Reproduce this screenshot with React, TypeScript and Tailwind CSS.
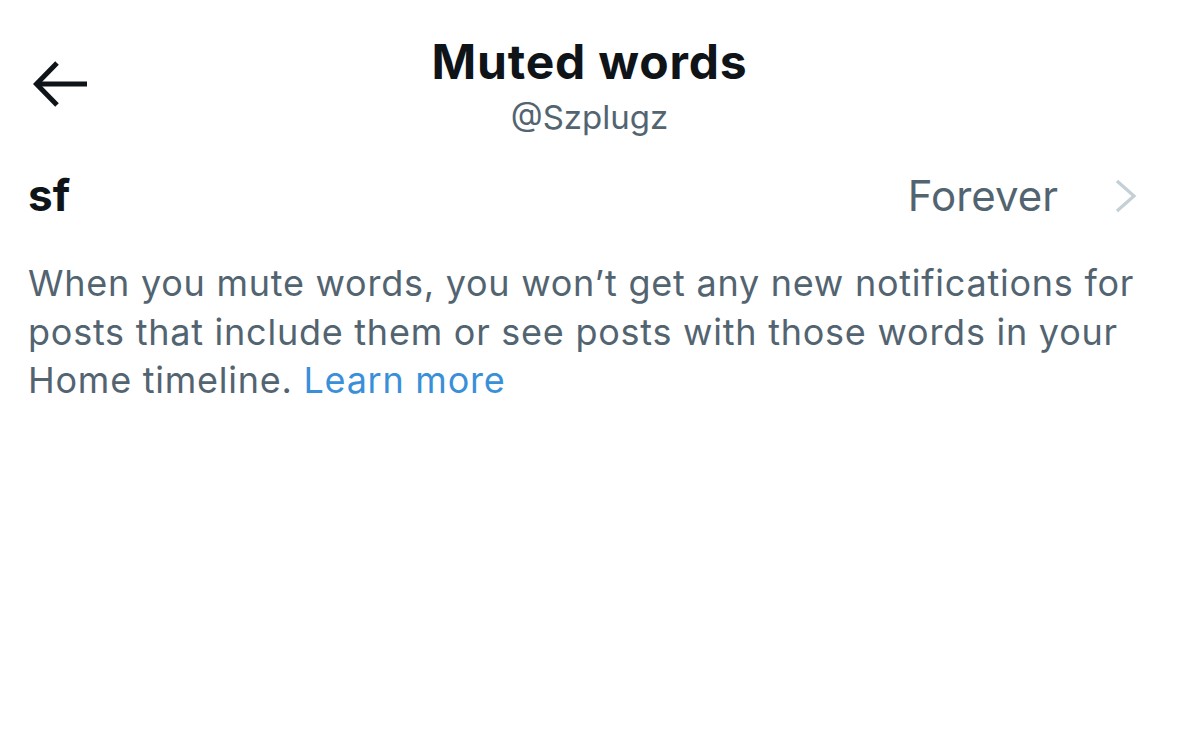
const App = () => {
  return (
    <div className="w-[1179px] h-[736px] bg-white overflow-hidden" style={{ fontFamily: 'Inter, "Noto Sans", sans-serif' }}>
      {/* Header */}
      <header className="relative flex flex-col items-center pt-[33px]">
        <button className="absolute left-[33px] top-[60px] text-[#0f1419]" aria-label="Back">
          <svg width="56" height="48" viewBox="0 0 56 48" fill="none" stroke="currentColor" strokeWidth={5}>
            <path d="M4 24h50" />
            <path d="M24 3L3.5 24 24 45" strokeLinejoin="miter" />
          </svg>
        </button>
        <h1 className="text-[48px] leading-[58px] font-bold text-[#0f1419] tracking-[0.8px]">Muted words</h1>
        <p className="mt-[6px] text-[33px] leading-[40px] text-[#536471]">@Szplugz</p>
      </header>

      {/* Muted word row */}
      <div className="mt-[32px] flex items-center justify-between pl-[28px] pr-[42px] h-[53px]">
        <span className="text-[44px] leading-[53px] font-bold text-[#0f1419]">sf</span>
        <div className="flex items-center gap-[57px]">
          <span className="text-[42px] leading-[53px] text-[#536471]">Forever</span>
          <svg width="22" height="34" viewBox="0 0 22 34" fill="none" stroke="#c4cfd6" strokeWidth={3.2}>
            <path d="M2 2l17 15L2 32" />
          </svg>
        </div>
      </div>

      {/* Description */}
      <p className="mt-[37px] px-[28px] text-[36px] leading-[48.5px] tracking-[0.75px] text-[#536471]">
        When you mute words, you won’t get any new notifications for posts that include them or see posts with those words in your Home timeline.{' '}
        <a className="text-[#3a8fd9]">Learn more</a>
      </p>
    </div>
  );
};

export default App;
